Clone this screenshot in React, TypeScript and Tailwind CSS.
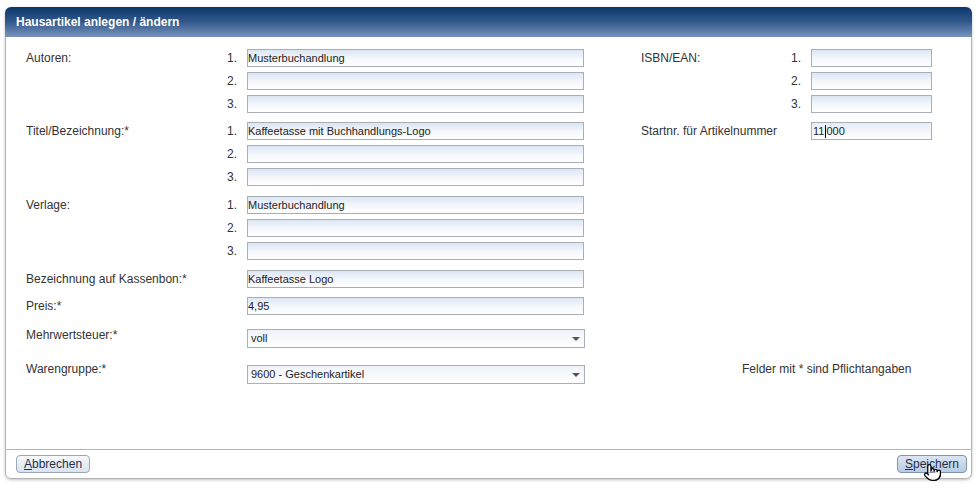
import { Pointer } from 'lucide-react';

const font = { fontFamily: '"Liberation Sans", Arial, sans-serif' };

function Field({ value = '', w = 'w-[337px]' }: { value?: string; w?: string }) {
  return (
    <input
      readOnly
      value={value}
      className={`block ${w} h-[18px] border border-[#a9afb6] bg-gradient-to-b from-[#dbe5f3] via-[#f3f6fb] to-white px-0 text-[11px] leading-none text-[#222] outline-none`}
    />
  );
}

function Select({ value }: { value: string }) {
  return (
    <div className="flex h-[19px] w-[338px] items-center justify-between border border-[#a9afb6] bg-gradient-to-b from-[#eef2f8] to-white pl-[3px] pr-[4px] text-[11px] text-[#222]">
      <span>{value}</span>
      <span className="h-0 w-0 border-x-[4px] border-t-[4px] border-x-transparent border-t-[#555]" />
    </div>
  );
}

function Group({ label, values }: { label: string; values: string[] }) {
  return (
    <div className="flex">
      <div className="w-[200px] pt-[1px] text-[12px] leading-4 text-[#333]">{label}</div>
      <div className="flex flex-col gap-[5px]">
        {values.map((v, i) => (
          <div key={i} className="flex h-[18px] items-center">
            <span className="w-[11px] text-right text-[12px] leading-4 text-[#333]">{i + 1}.</span>
            <div className="ml-[10px]">
              <Field value={v} />
            </div>
          </div>
        ))}
      </div>
    </div>
  );
}

function Single({ label, children }: { label: string; children: React.ReactNode }) {
  return (
    <div className="flex">
      <div className="w-[221px] pt-[1px] text-[12px] leading-4 text-[#333]">{label}</div>
      {children}
    </div>
  );
}

function Btn({ label, hover }: { label: string; hover?: boolean }) {
  return (
    <button
      className={`h-[18px] rounded-[4px] border px-[7px] text-[12px] leading-none text-[#1f2f4a] ${
        hover
          ? 'border-[#7f94ae] bg-gradient-to-b from-[#dbe6f4] to-[#b9cbe2]'
          : 'border-[#9aa7b8] bg-gradient-to-b from-[#f7f9fc] to-[#d9e2ee]'
      }`}
    >
      <span className="underline">{label[0]}</span>
      {label.slice(1)}
    </button>
  );
}

export default function App() {
  return (
    <div className="h-[488px] w-[978px] bg-white pl-[5px] pt-[7px]" style={font}>
      <div className="w-[967px] rounded-[6px] shadow-[0_1px_3px_rgba(0,0,0,0.25)]">
        <div className="flex h-[30px] items-center rounded-t-[6px] bg-gradient-to-b from-[#0a376c] via-[#33598c] to-[#7995bd] pl-[11px] text-[12px] font-bold text-white">
          Hausartikel anlegen / ändern
        </div>
        <div className="flex h-[412px] border-x border-[#b4b4b4] bg-white pl-[20px] pt-[12px]">
          <div className="flex w-[615px] flex-col">
            <Group label="Autoren:" values={['Musterbuchandlung', '', '']} />
            <div className="mt-[9px]">
              <Group label="Titel/Bezeichnung:*" values={['Kaffeetasse mit Buchhandlungs-Logo', '', '']} />
            </div>
            <div className="mt-[10px]">
              <Group label="Verlage:" values={['Musterbuchandlung', '', '']} />
            </div>
            <div className="mt-[10px]">
              <Single label="Bezeichnung auf Kassenbon:*">
                <Field value="Kaffeetasse Logo" />
              </Single>
            </div>
            <div className="mt-[9px]">
              <Single label="Preis:*">
                <Field value="4,95" />
              </Single>
            </div>
            <div className="mt-[11px]">
              <Single label="Mehrwertsteuer:*">
                <div className="mt-[3px]">
                  <Select value="voll" />
                </div>
              </Single>
            </div>
            <div className="mt-[12px]">
              <Single label="Warengruppe:*">
                <div className="mt-[5px]">
                  <Select value="9600 - Geschenkartikel" />
                </div>
              </Single>
            </div>
          </div>
          <div className="flex w-[320px] flex-col">
            <div className="flex">
              <div className="w-[150px] pt-[1px] text-[12px] leading-4 text-[#333]">ISBN/EAN:</div>
              <div className="flex flex-col gap-[5px]">
                {[1, 2, 3].map((n) => (
                  <div key={n} className="flex h-[18px] items-center">
                    <span className="w-[10px] text-right text-[12px] leading-4 text-[#333]">{n}.</span>
                    <div className="ml-[10px]">
                      <Field w="w-[121px]" />
                    </div>
                  </div>
                ))}
              </div>
            </div>
            <div className="mt-[9px] flex">
              <div className="w-[170px] pt-[1px] text-[12px] leading-4 text-[#333]">Startnr. für Artikelnummer</div>
              <div className="flex h-[18px] w-[121px] items-center border border-[#a9afb6] bg-gradient-to-b from-[#e6edf7] to-white px-[1px] text-[11px] text-[#222]">
                11<span className="mx-[0.5px] h-[13px] w-px bg-black" />000
              </div>
            </div>
            <div className="mt-[221px] pl-[101px] text-[12px] leading-4 text-[#333]">Felder mit * sind Pflichtangaben</div>
          </div>
        </div>
        <div className="relative flex h-[30px] items-center justify-between rounded-b-[6px] border border-[#b4b4b4] bg-white pl-[10px] pr-[4px]">
          <Btn label="Abbrechen" />
          <Btn label="Speichern" hover />
          <Pointer
            size={19}
            strokeWidth={1.6}
            className="absolute left-[917px] top-[13px] fill-white text-black"
          />
        </div>
      </div>
    </div>
  );
}
